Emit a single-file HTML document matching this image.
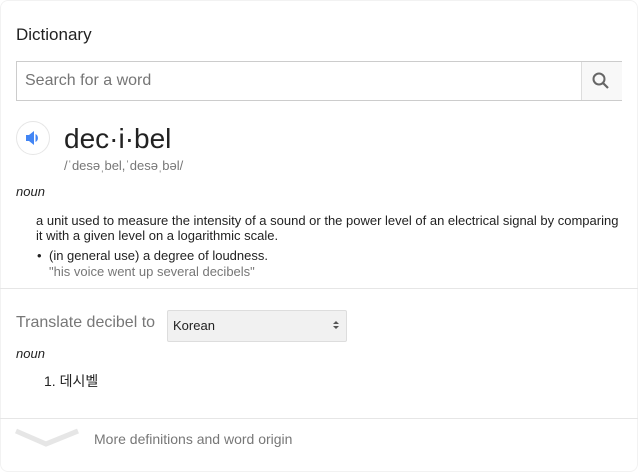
<!DOCTYPE html>
<html><head><meta charset="utf-8"><style>
body{margin:0;width:638px;height:459px;background:#fff;font-family:"Liberation Sans","Noto Sans CJK KR",sans-serif;position:relative;overflow:hidden}
.a{position:absolute;white-space:nowrap}
</style></head><body>
<div class="a" style="left:0;top:0;width:636px;height:470px;border:1px solid #f2f2f2;border-radius:8px"></div>
<div class="a" style="left:16px;top:25px;font-size:17px;color:#222">Dictionary</div>
<div class="a" style="left:16px;top:61px;width:604px;height:38px;border:1px solid #ccc"></div>
<div class="a" style="left:25px;top:72px;font-size:16px;color:#757575">Search for a word</div>
<div class="a" style="left:581px;top:62px;width:40px;height:38px;background:#f8f8f8;border-left:1px solid #ddd"></div>
<svg class="a" style="left:591px;top:71px" width="20" height="20" viewBox="0 0 20 20"><circle cx="8" cy="8" r="5.5" fill="none" stroke="#666" stroke-width="2"/><path d="M12 12l5 5" stroke="#666" stroke-width="2.2"/></svg>
<div class="a" style="left:16px;top:121px;width:34px;height:34px;border-radius:50%;border:1px solid #e6e6e6;box-sizing:border-box"></div>
<svg class="a" style="left:24px;top:130px" width="18" height="16" viewBox="0 0 18 16"><path d="M2 5h3l5-4v14l-5-4H2z" fill="#4285f4"/><path d="M11.5 4a4.5 4.5 0 0 1 0 8z" fill="#4285f4"/></svg>
<div class="a" style="left:64px;top:123px;font-size:28px;color:#222">dec·i·bel</div>
<div class="a" style="left:64px;top:158px;font-size:13px;color:#777">/ˈdesəˌbel,ˈdesəˌbəl/</div>
<div class="a" style="left:16px;top:184px;font-size:13px;font-style:italic;color:#222">noun</div>
<div class="a" style="left:36px;top:213px;font-size:13px;color:#222;white-space:normal;width:590px;line-height:15px">a unit used to measure the intensity of a sound or the power level of an electrical signal by comparing it with a given level on a logarithmic scale.</div>
<div class="a" style="left:37px;top:248px;font-size:13px;color:#222">•</div>
<div class="a" style="left:49px;top:248px;font-size:13px;color:#222">(in general use) a degree of loudness.</div>
<div class="a" style="left:49px;top:264px;font-size:13px;color:#777">"his voice went up several decibels"</div>
<div class="a" style="left:0;top:288px;width:638px;height:1px;background:#e6e6e6"></div>
<div class="a" style="left:16px;top:314px;font-size:16px;color:#777">Translate decibel to</div>
<div class="a" style="left:167px;top:310px;width:178px;height:30px;background:#f1f1f1;border:1px solid #ddd;border-radius:2px"></div>
<div class="a" style="left:173px;top:318px;font-size:13px;color:#222">Korean</div>
<svg class="a" style="left:332px;top:320px" width="8" height="10" viewBox="0 0 8 10"><path d="M1 4l3-3 3 3zM1 6l3 3 3-3z" fill="#555"/></svg>
<div class="a" style="left:16px;top:346px;font-size:13px;font-style:italic;color:#222">noun</div>
<div class="a" style="left:44px;top:371px;font-size:14px;color:#222">1. 데시벨</div>
<div class="a" style="left:0;top:418px;width:638px;height:1px;background:#e6e6e6"></div>
<svg class="a" style="left:14px;top:426px" width="66" height="24" viewBox="0 0 66 24"><path d="M2 5l30 13 32-13" stroke="#e6e6e6" stroke-width="5" fill="none"/></svg>
<div class="a" style="left:94px;top:431px;font-size:14px;color:#777">More definitions and word origin</div>
</body></html>
